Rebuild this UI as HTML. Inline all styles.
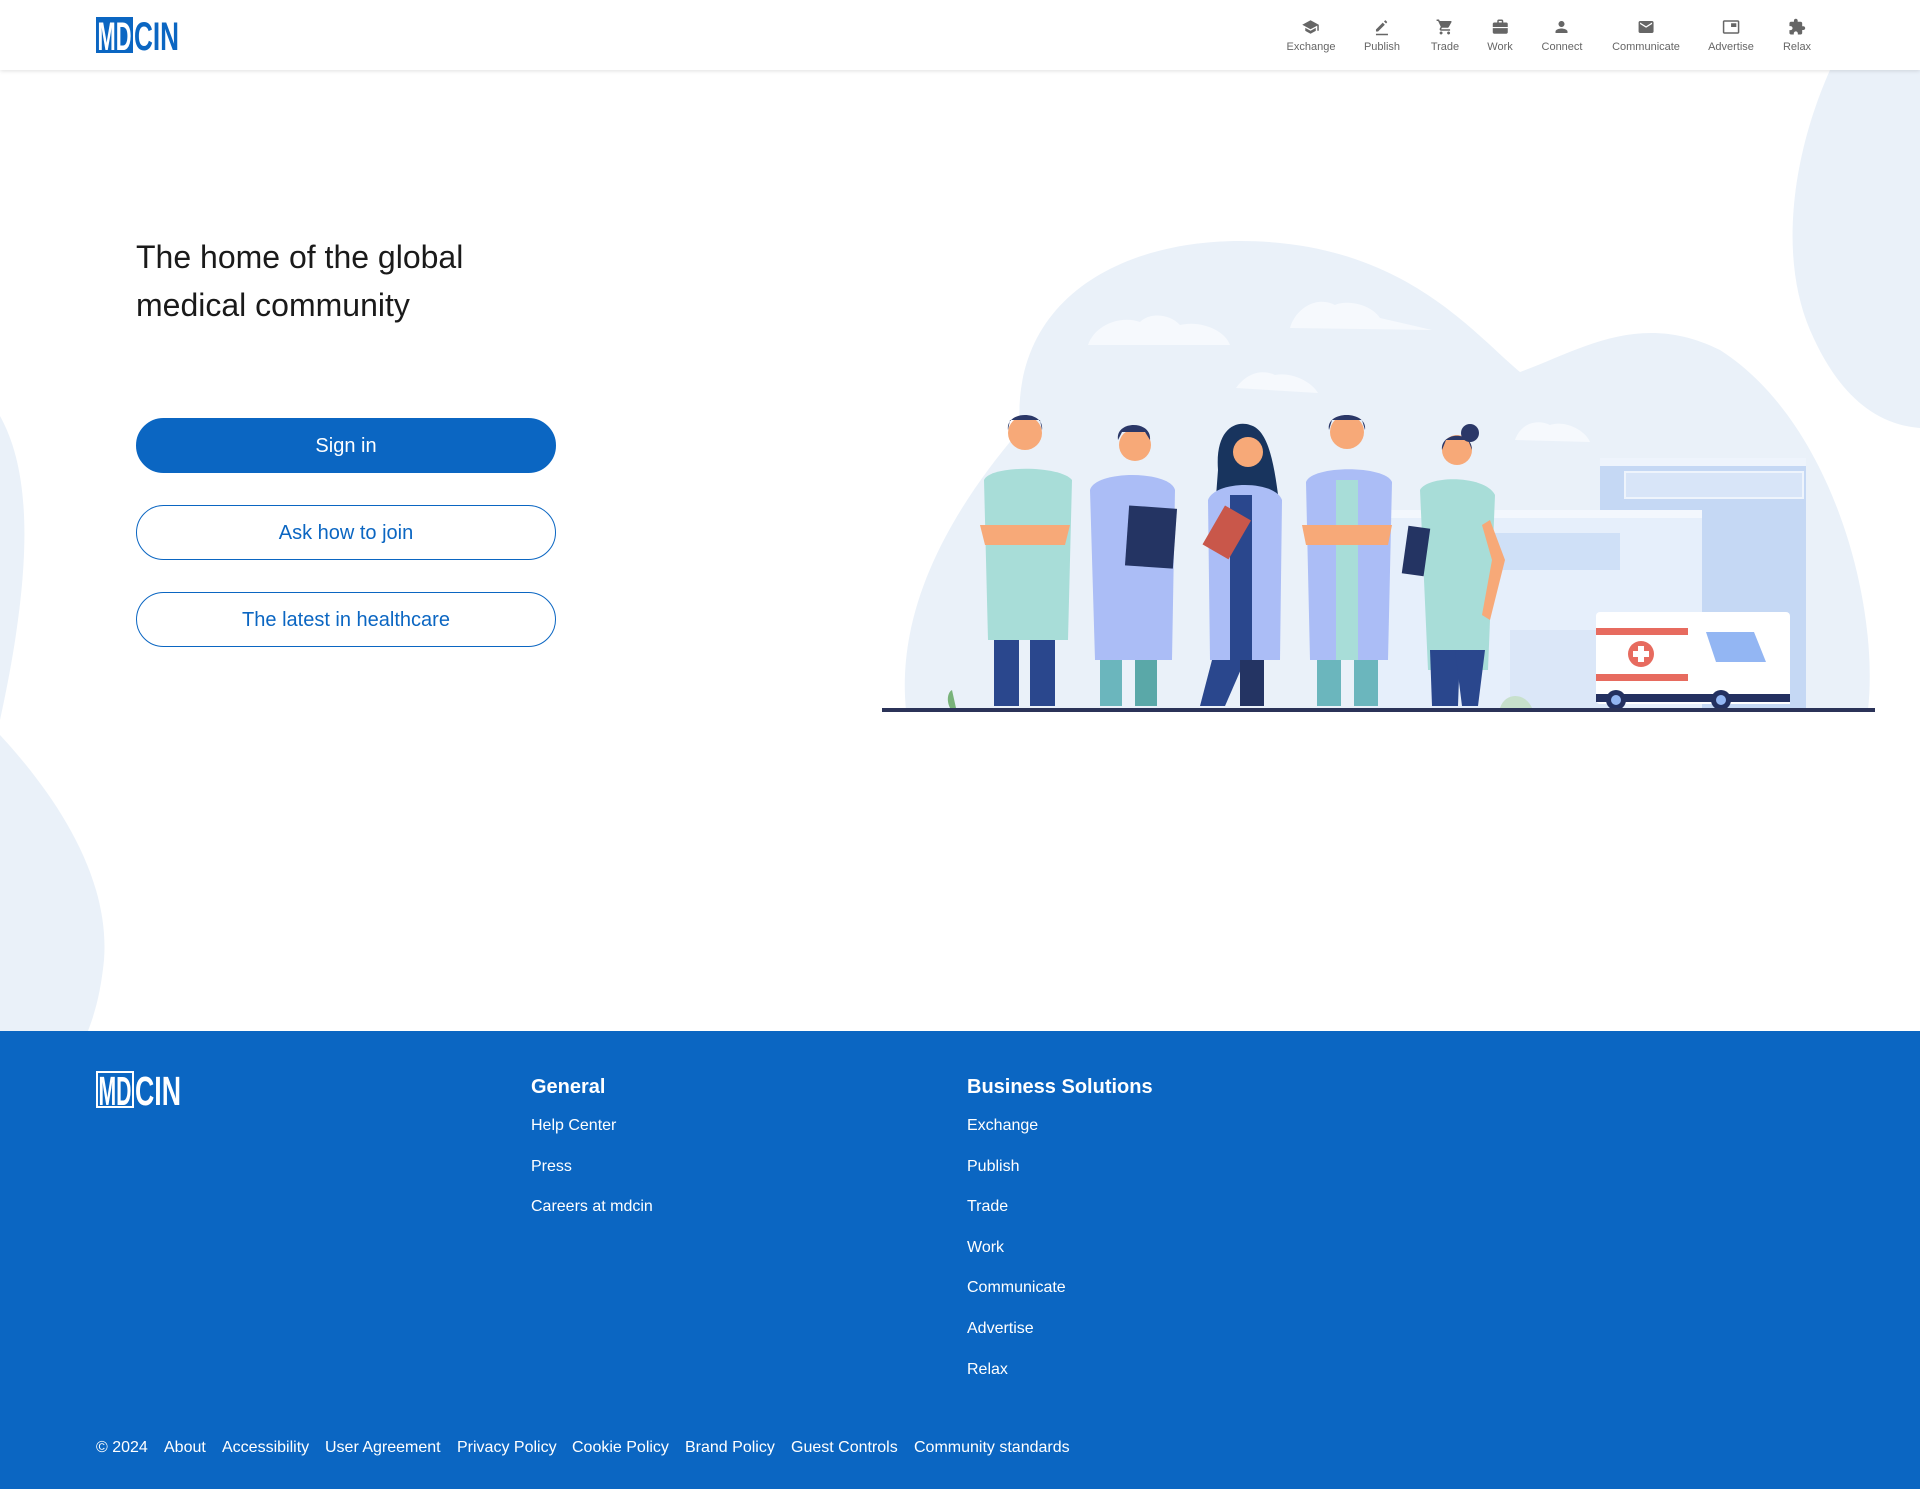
<!DOCTYPE html>
<html><head><meta charset="utf-8"><style>
*{margin:0;padding:0;box-sizing:border-box}
body{width:1920px;height:1489px;position:relative;overflow:hidden;font-family:"Liberation Sans",Arial,sans-serif;background:#fff}
.hdr{position:absolute;left:0;top:0;width:1920px;height:70px;background:#fff;box-shadow:0 1px 4px rgba(0,0,0,.12);z-index:5}
.nav{position:absolute;top:18px;transform:translateX(-50%);text-align:center;color:#666;font-size:11px;white-space:nowrap}
.nav svg{display:block;margin:0 auto 5px;width:18px;height:18px;fill:#666}
.h1{position:absolute;left:136px;top:233px;font-size:32px;line-height:48px;color:#1a1a1a;z-index:2}
.btn{position:absolute;left:136px;width:420px;height:55px;border-radius:28px;font-size:20px;text-align:center;line-height:57px;z-index:2}
.b1{background:#0b66c2;color:#fff;border:1px solid #0b66c2;line-height:55px}
.b2{border:1.5px solid #0b66c2;color:#0b66c2;background:#fff;line-height:55px}
.ft{position:absolute;left:0;top:1031px;width:1920px;height:458px;background:#0b66c2;color:#fff}
.ft a{position:absolute;font-size:16px;color:#fff;text-decoration:none;white-space:nowrap;margin-top:2px}
.ft h3{position:absolute;font-size:20px;font-weight:bold;margin-top:2px}
</style></head><body>
<svg style="position:absolute;left:0;top:0" width="1920" height="1031" viewBox="0 0 1920 1031">
<path fill="#eaf1f9" d="M0 416 C30 470 35 560 0 720 L0 735 C60 800 110 880 104 960 C100 1000 92 1020 88 1031 L0 1031Z"/>
<path fill="#eaf1f9" d="M1830 70 C1790 160 1780 260 1810 330 C1840 400 1880 425 1920 428 L1920 70Z"/>
<path fill="#eaf1f9" d="M906 710 C895 600 960 500 1020 430 C1010 300 1120 241 1240 241 C1400 241 1470 330 1520 372 C1580 350 1640 310 1720 350 C1830 420 1880 600 1868 710Z"/>
<g fill="#f6f9fd"><path d="M1088 345 C1095 325 1120 315 1140 322 C1150 312 1170 314 1180 325 C1200 320 1225 330 1230 345Z"/><path d="M1290 328 C1295 310 1315 295 1335 305 C1345 300 1370 303 1380 318 L1432 330Z"/><path d="M1236 388 C1245 375 1260 368 1275 375 C1290 372 1310 380 1318 393Z"/><path d="M1515 440 C1520 425 1535 418 1550 425 C1565 420 1585 430 1590 442Z"/></g>
<rect x="1600" y="460" width="206" height="250" fill="#c5d8f4"/>
<rect x="1600" y="458" width="206" height="8" fill="#eef4fc"/>
<rect x="1625" y="472" width="178" height="26" fill="#d8e5f8" stroke="#eef4fc" stroke-width="2"/>
<rect x="1370" y="512" width="332" height="198" fill="#e6effb"/>
<rect x="1370" y="510" width="332" height="8" fill="#f3f7fd"/>
<rect x="1470" y="533" width="150" height="37" fill="#cfe0f7"/>
<rect x="1510" y="630" width="100" height="80" fill="#dbe7f8"/>
<g transform="translate(1596,612)"><rect width="194" height="92" rx="4" fill="#fff"/><rect x="0" y="16" width="92" height="7" fill="#e76b5f"/><rect x="0" y="62" width="140" height="7" fill="#e76b5f"/><path d="M92 0 L165 0 C178 0 185 30 194 60 L194 92 L92 92Z" fill="#fff"/><path d="M110 20 L158 20 L170 50 L120 50Z" fill="#93b6f3"/><circle cx="45" cy="42" r="13" fill="#e76b5f"/><rect x="42" y="34" width="6" height="16" fill="#fff"/><rect x="37" y="39" width="16" height="6" fill="#fff"/><rect x="0" y="82" width="194" height="8" fill="#233060"/><circle cx="20" cy="88" r="10" fill="#233060"/><circle cx="125" cy="88" r="10" fill="#233060"/><circle cx="20" cy="88" r="5" fill="#93b6f3"/><circle cx="125" cy="88" r="5" fill="#93b6f3"/></g>
<g>
<circle cx="1025" cy="433" r="17" fill="#f7a978"/><path d="M1008 430 C1005 410 1045 410 1042 430 L1040 420 L1010 420Z" fill="#2b3868"/>
<path d="M984 480 C990 465 1060 465 1072 480 L1068 640 L988 640Z" fill="#a8ddd8"/>
<rect x="994" y="640" width="25" height="66" fill="#2a478d"/><rect x="1030" y="640" width="25" height="66" fill="#2a478d"/>
<path d="M980 525 L1070 525 L1065 545 L985 545Z" fill="#f7a978"/>
<circle cx="1135" cy="445" r="16" fill="#f7a978"/><path d="M1118 440 C1115 420 1152 420 1150 440 L1145 432 L1122 432Z" fill="#2b3868"/>
<path d="M1090 490 C1095 470 1170 470 1175 490 L1172 660 L1095 660Z" fill="#abbdf6"/>
<rect x="1100" y="660" width="22" height="46" fill="#6bb6bd"/><rect x="1135" y="660" width="22" height="46" fill="#5aa8a8"/>
<rect x="1127" y="507" width="48" height="60" fill="#243463" transform="rotate(4 1150 537)"/>
<path d="M1218 470 C1215 430 1235 420 1250 425 C1270 430 1275 470 1280 510 L1215 510Z" fill="#18345e"/>
<circle cx="1248" cy="452" r="15" fill="#f7a978"/>
<path d="M1208 500 C1215 480 1275 480 1282 500 L1280 660 L1210 660Z" fill="#abbdf6"/>
<rect x="1230" y="495" width="22" height="165" fill="#2a478d"/>
<path d="M1212 660 L1245 660 L1225 706 L1200 706Z" fill="#2a478d"/><rect x="1240" y="660" width="24" height="46" fill="#243463"/>
<rect x="1212" y="510" width="30" height="45" fill="#c9574a" transform="rotate(30 1227 532)"/>
<circle cx="1347" cy="432" r="17" fill="#f7a978"/><path d="M1329 430 C1325 410 1368 410 1365 430 L1362 420 L1332 420Z" fill="#2b3868"/>
<path d="M1306 482 C1312 465 1385 465 1392 482 L1388 660 L1310 660Z" fill="#abbdf6"/>
<rect x="1336" y="480" width="22" height="180" fill="#a8ddd8"/>
<rect x="1317" y="660" width="24" height="46" fill="#6bb6bd"/><rect x="1354" y="660" width="24" height="46" fill="#6bb6bd"/>
<path d="M1302 525 L1392 525 L1388 545 L1306 545Z" fill="#f7a978"/>
<circle cx="1457" cy="450" r="15" fill="#f7a978"/><circle cx="1470" cy="433" r="9" fill="#2b3868"/><path d="M1442 450 C1440 432 1472 430 1472 450 L1468 440 L1446 440Z" fill="#2b3868"/>
<path d="M1420 490 C1428 475 1485 475 1495 495 L1488 670 L1428 670Z" fill="#a8ddd8"/>
<path d="M1430 650 L1460 650 L1458 706 L1432 706Z" fill="#2a478d"/><path d="M1455 650 L1485 650 L1478 706 L1462 706Z" fill="#2a478d"/>
<rect x="1405" y="527" width="22" height="48" fill="#243463" transform="rotate(8 1416 551)"/>
<path d="M1490 520 L1505 560 L1490 620 L1482 615 L1492 560 L1482 525Z" fill="#f7a978"/>
</g>
<path d="M950 708 C946 700 948 692 952 690 L956 708Z" fill="#79b37a"/>
<path d="M1500 708 C1505 692 1525 692 1532 708Z" fill="#c7e0cc"/>
<rect x="882" y="708" width="993" height="4" fill="#2b3358"/>
</svg>

<div class="hdr">
<svg style="position:absolute;left:96px;top:17px" width="84" height="36" viewBox="0 0 84 36"><rect x="0" y="0" width="37" height="36" fill="#0b66c2"/><text x="1.5" y="33" fill="#fff" font-family="Liberation Sans" font-weight="bold" font-size="40" textLength="34" lengthAdjust="spacingAndGlyphs">MD</text><text x="38" y="33" fill="#0b66c2" font-family="Liberation Sans" font-weight="bold" font-size="40" textLength="45" lengthAdjust="spacingAndGlyphs">CIN</text></svg>
<div class="nav" style="left:1311px"><svg viewBox="0 0 24 24"><path d="M5 13.18v4L12 21l7-3.82v-4L12 17l-7-3.82zM12 3L1 9l11 6 9-4.91V17h2V9L12 3z"/></svg>Exchange</div>
<div class="nav" style="left:1382px"><svg viewBox="0 0 24 24"><path d="M4 15.25V18h2.75L15.8 8.94l-2.75-2.75L4 15.25zM18.7 6.04c.3-.3.3-.8 0-1.1l-1.6-1.6a.8.8 0 0 0-1.1 0l-1.3 1.3 2.75 2.75 1.25-1.35zM4 21h16v2H4z"/></svg>Publish</div>
<div class="nav" style="left:1445px"><svg viewBox="0 0 24 24"><path d="M7 18c-1.1 0-1.99.9-1.99 2S5.9 22 7 22s2-.9 2-2-.9-2-2-2zM1 2v2h2l3.6 7.59-1.35 2.45c-.16.28-.25.61-.25.96 0 1.1.9 2 2 2h12v-2H7.42c-.14 0-.25-.11-.25-.25l.03-.12.9-1.63h7.450c.75 0 1.41-.41 1.750-1.03l3.580-6.49A1.003 1.003 0 0 0 20 4H5.21l-.94-2H1zm16 16c-1.1 0-1.99.9-1.99 2s.89 2 1.990 2 2-.9 2-2-.9-2-2-2z"/></svg>Trade</div>
<div class="nav" style="left:1500px"><svg viewBox="0 0 24 24"><path d="M20 6h-4V4c0-1.11-.89-2-2-2h-4c-1.11 0-2 .89-2 2v2H4c-1.11 0-1.99.89-1.99 2L2 19c0 1.11.89 2 2 2h16c1.11 0 2-.89 2-2V8c0-1.11-.89-2-2-2zm-6 0h-4V4h4v2zM2 12h20v1.5H2z"/></svg>Work</div>
<div class="nav" style="left:1562px"><svg viewBox="0 0 24 24"><path d="M12 12c2.21 0 4-1.790 4-4s-1.79-4-4-4-4 1.79-4 4 1.79 4 4 4zm0 2c-2.67 0-8 1.34-8 4v2h16v-2c0-2.66-5.33-4-8-4z"/></svg>Connect</div>
<div class="nav" style="left:1646px"><svg viewBox="0 0 24 24"><path d="M20 4H4c-1.1 0-1.99.9-1.99 2L2 18c0 1.1.9 2 2 2h16c1.1 0 2-.9 2-2V6c0-1.1-.9-2-2-2zm0 4l-8 5-8-5V6l8 5 8-5v2z"/></svg>Communicate</div>
<div class="nav" style="left:1731px"><svg viewBox="0 0 24 24"><path d="M21 3H3c-1.1 0-2 .9-2 2v14c0 1.1.9 2 2 2h18c1.1 0 2-.9 2-2V5c0-1.1-.9-2-2-2zm0 16H3V5h18v14zM19 7h-7v5h7z"/></svg>Advertise</div>
<div class="nav" style="left:1797px"><svg viewBox="0 0 24 24"><path d="M20.5 11H19V7c0-1.1-.9-2-2-2h-4V3.5C13 2.12 11.88 1 10.5 1S8 2.12 8 3.5V5H4c-1.1 0-1.99.9-1.99 2v3.8H3.5c1.49 0 2.7 1.21 2.7 2.7s-1.21 2.7-2.7 2.7H2V20c0 1.1.9 2 2 2h3.8v-1.5c0-1.49 1.21-2.7 2.7-2.7 1.49 0 2.7 1.21 2.7 2.7V22H17c1.1 0 2-.9 2-2v-4h1.5c1.38 0 2.5-1.12 2.5-2.5S21.88 11 20.5 11z"/></svg>Relax</div>
</div>

<div class="h1">The home of the global<br>medical community</div>
<div class="btn b1" style="top:418px">Sign in</div>
<div class="btn b2" style="top:505px">Ask how to join</div>
<div class="btn b2" style="top:592px">The latest in healthcare</div>

<div class="ft">
<svg style="position:absolute;left:96px;top:40px" width="86" height="37" viewBox="0 0 86 37"><rect x="1" y="1" width="36" height="35" fill="none" stroke="#fff" stroke-width="2"/><text x="2.5" y="34" fill="#fff" font-family="Liberation Sans" font-weight="bold" font-size="41" textLength="33" lengthAdjust="spacingAndGlyphs">MD</text><text x="39" y="34" fill="#fff" font-family="Liberation Sans" font-weight="bold" font-size="41" textLength="46" lengthAdjust="spacingAndGlyphs">CIN</text></svg>
<h3 style="left:531px;top:43px">General</h3>
<a style="left:531px;top:84px">Help Center</a>
<a style="left:531px;top:125px">Press</a>
<a style="left:531px;top:165px">Careers at mdcin</a>
<h3 style="left:967px;top:43px">Business Solutions</h3>
<a style="left:967px;top:84px">Exchange</a>
<a style="left:967px;top:125px">Publish</a>
<a style="left:967px;top:165px">Trade</a>
<a style="left:967px;top:206px">Work</a>
<a style="left:967px;top:246px">Communicate</a>
<a style="left:967px;top:287px">Advertise</a>
<a style="left:967px;top:328px">Relax</a>
<a style="left:96px;top:406px">© 2024</a>
<a style="left:164px;top:406px">About</a>
<a style="left:222px;top:406px">Accessibility</a>
<a style="left:325px;top:406px">User Agreement</a>
<a style="left:457px;top:406px">Privacy Policy</a>
<a style="left:572px;top:406px">Cookie Policy</a>
<a style="left:685px;top:406px">Brand Policy</a>
<a style="left:791px;top:406px">Guest Controls</a>
<a style="left:914px;top:406px">Community standards</a>
</div>
</body></html>
